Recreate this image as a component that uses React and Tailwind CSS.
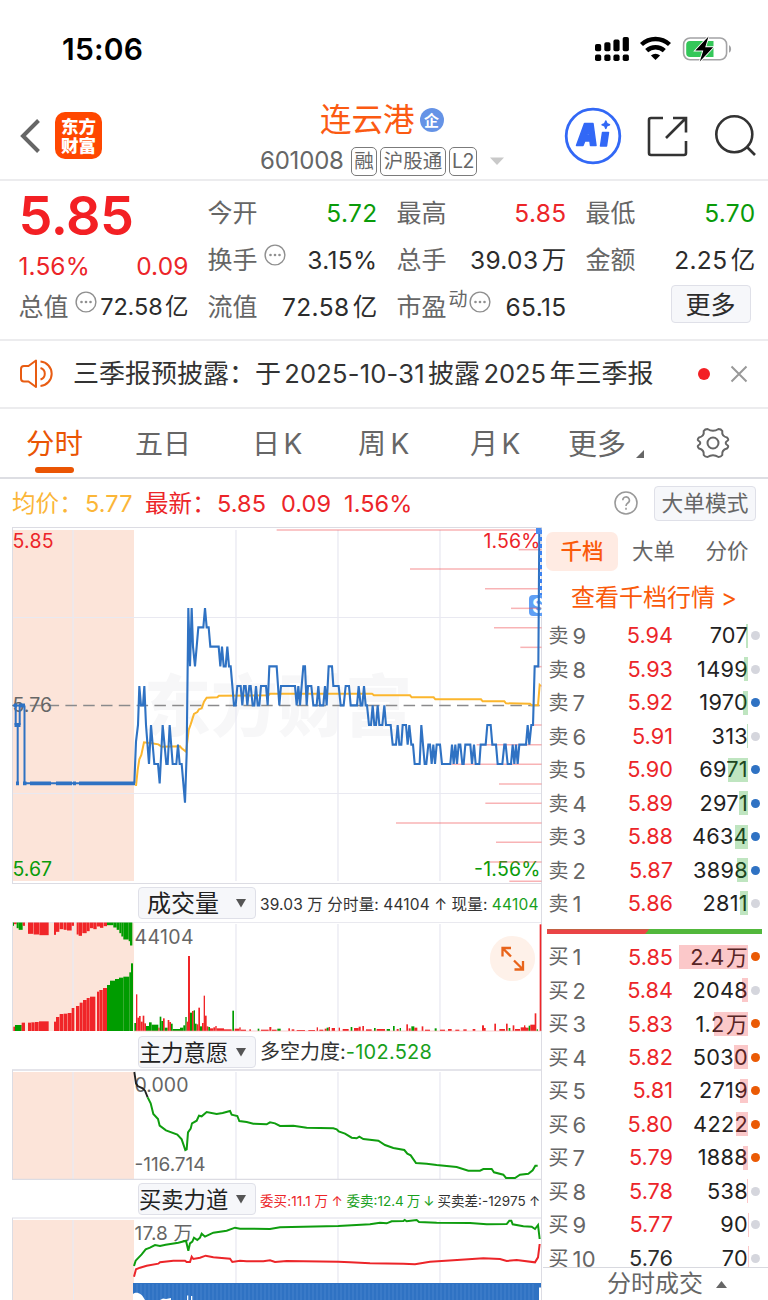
import React from 'react';

const GRAY = '#d5d6dd';
const BLUE = '#2f72c3';
const ORANGE = '#ea5a05';

const asks = [
  { label: '9', price: '5.94', volume: '707', depth: 2, dot: GRAY },
  { label: '8', price: '5.93', volume: '1499', depth: 4, dot: GRAY },
  { label: '7', price: '5.92', volume: '1970', depth: 5.5, dot: BLUE },
  { label: '6', price: '5.91', volume: '313', depth: 1, dot: GRAY },
  { label: '5', price: '5.90', volume: '6971', depth: 20.5, dot: BLUE },
  { label: '4', price: '5.89', volume: '2971', depth: 9, dot: BLUE },
  { label: '3', price: '5.88', volume: '4634', depth: 13.5, dot: BLUE },
  { label: '2', price: '5.87', volume: '3898', depth: 11.5, dot: BLUE },
  { label: '1', price: '5.86', volume: '2811', depth: 8.5, dot: GRAY },
];

const bids = [
  { label: '1', price: '5.85', volume: '2.4 万', depth: 69, dot: ORANGE },
  { label: '2', price: '5.84', volume: '2048', depth: 6, dot: GRAY },
  { label: '3', price: '5.83', volume: '1.2 万', depth: 34, dot: ORANGE },
  { label: '4', price: '5.82', volume: '5030', depth: 14.5, dot: ORANGE },
  { label: '5', price: '5.81', volume: '2719', depth: 8, dot: ORANGE },
  { label: '6', price: '5.80', volume: '4222', depth: 12, dot: ORANGE },
  { label: '7', price: '5.79', volume: '1888', depth: 5.5, dot: ORANGE },
  { label: '8', price: '5.78', volume: '538', depth: 1.5, dot: GRAY },
  { label: '9', price: '5.77', volume: '90', depth: 0.5, dot: GRAY },
  { label: '10', price: '5.76', volume: '70', depth: 0.5, dot: GRAY, flat: true },
];

// Series are stored in 1/3 px units
const priceLine =
  '403,790 408,665 414,615 418,498 423,556 429,556 433,498 438,615 447,732 453,615 463,732 474,732 479,790 488,615 499,732 503,732 509,615 518,732 529,732 534,674 539,732 545,732 555,848 560,700 565,264 570,439 575,264 579,380 585,439 595,322 610,322 615,264 620,322 626,322 631,380 656,380 661,439 666,380 671,439 677,439 682,380 687,439 692,439 702,556 707,556 712,498 722,498 727,556 732,498 737,498 742,556 748,498 752,498 758,556 763,556 768,498 773,556 778,556 783,498 798,498 803,556 808,439 830,439 ' +
  '838,556 843,498 885,498 890,556 895,498 900,556 910,439 915,439 920,556 924,498 934,498 940,556 950,556 955,498 960,556 970,556 975,498 980,556 986,439 996,439 1000,498 1016,498 1022,556 1031,556 1037,498 1047,498 1052,556 1071,556 1076,498 1082,556 1087,556 1092,498 1097,556 1101,556 1107,615 1113,615 1118,556 1123,615 1128,615 1133,556 1138,615 1147,615 1153,556 1158,615 1172,615 1178,674 1188,674 1193,615 1198,674 1204,674 1208,615 1218,615 1223,674 1228,615 1234,674 1239,674 1244,732 1259,732 1264,615 1274,732 1279,732 1285,674 1290,674 1295,732 1300,674 1305,732 1310,674 1320,674 1326,732 1351,732 1356,674 1361,732 1366,674 1371,732 1376,674 1381,674 1387,732 1391,732 1396,674 1411,674 1416,732 1422,674 1427,732 1438,732 1442,674 1457,674 1462,615 1472,615 1477,674 1488,674 1493,732 1507,732 1513,674 1517,674 1523,732 1533,732 1538,674 1543,732 1548,674 1553,732 1558,674 1578,674 1583,615 1588,674 1594,615 1599,615 1604,439 1615,439 1618,30';

const averageLine =
  '408,798 413,750 418,718 424,705 432,667 455,670 475,673 485,680 540,679 545,685 558,695 562,665 566,630 572,613 582,582 592,576 597,568 605,565 612,545 620,533 652,532 657,527 805,526 810,521 1116,521 1122,526 1230,526 1235,532 1301,532 1306,538 1443,538 1448,544 1513,544 1518,550 1590,551 1595,556 1614,556 1619,495 1622,498';

const orderLines = [
  [20, 30], [746, 89], [420, 147], [645, 206], [723, 265], [672, 323], [751, 382], [800, 440], [811, 498],
  [785, 615], [620, 674], [545, 733], [687, 792], [646, 850], [378, 909], [678, 967], [655, 1026], [718, 1084],
];

// [from, to, height, color]
const auctionTop = [
  [39, 42, 10, 'g'], [42, 50, 5, 'r'], [50, 56, 17, 'g'], [56, 68, 22, 'g'], [68, 75, 10, 'r'],
  [84, 100, 34, 'r'], [101, 117, 36, 'r'], [118, 146, 38, 'r'], [162, 168, 37, 'r'], [168, 178, 28, 'r'],
  [179, 190, 20, 'r'], [191, 200, 22, 'r'], [201, 215, 24, 'r'], [215, 222, 10, 'r'], [230, 236, 36, 'r'],
  [236, 246, 40, 'r'], [247, 260, 32, 'r'], [260, 269, 26, 'r'], [270, 280, 17, 'r'], [280, 290, 20, 'r'],
  [291, 300, 12, 'r'], [300, 310, 16, 'r'], [311, 321, 11, 'r'], [321, 340, 8, 'g'], [340, 350, 15, 'g'],
  [350, 358, 22, 'g'], [358, 364, 32, 'g'], [364, 370, 42, 'g'], [370, 386, 51, 'g'], [386, 390, 56, 'g'], [390, 397, 69, 'g'],
];

const auctionBottom = [
  [40, 45, 13, 'r'], [45, 65, 18, 'g'], [65, 75, 25, 'r'], [84, 93, 25, 'r'], [94, 104, 26, 'r'], [105, 116, 27, 'r'],
  [117, 146, 29, 'r'], [162, 168, 28, 'r'], [168, 178, 42, 'r'], [179, 190, 51, 'r'], [191, 202, 52, 'r'], [203, 215, 54, 'r'],
  [215, 223, 69, 'r'], [228, 238, 75, 'r'], [239, 248, 85, 'r'], [249, 260, 93, 'r'], [260, 269, 99, 'r'], [270, 286, 103, 'r'],
  [291, 297, 118, 'r'], [298, 308, 123, 'r'], [309, 321, 129, 'r'], [321, 330, 138, 'g'], [330, 345, 151, 'g'],
  [345, 357, 156, 'g'], [357, 370, 160, 'g'], [370, 388, 163, 'g'], [388, 393, 176, 'g'], [393, 399, 203, 'g'],
];

const volumeBars = [
  [403, 408, 24, 'g'], [408, 412, 110, 'r'], [412, 417, 40, 'r'], [417, 422, 45, 'r'], [422, 428, 28, 'r'], [428, 433, 46, 'r'],
  [433, 438, 23, 'r'], [438, 447, 15, 'g'], [447, 455, 26, 'g'], [455, 475, 19, 'g'], [475, 479, 10, 'r'], [479, 484, 43, 'g'],
  [484, 489, 30, 'g'], [489, 494, 38, 'r'], [494, 503, 10, 'g'], [503, 508, 33, 'r'], [508, 513, 27, 'r'], [513, 518, 22, 'g'],
  [518, 540, 6, 'g'], [540, 550, 10, 'g'], [550, 556, 17, 'g'], [556, 560, 42, 'g'], [560, 564, 28, 'r'], [564, 570, 225, 'r'],
  [570, 576, 55, 'g'], [576, 581, 60, 'r'], [581, 585, 62, 'g'], [585, 590, 22, 'g'], [590, 595, 20, 'r'], [595, 600, 70, 'r'],
  [600, 606, 14, 'g'], [606, 611, 24, 'r'], [611, 615, 106, 'r'], [615, 620, 46, 'r'], [620, 625, 14, 'r'], [625, 630, 12, 'g'],
  [630, 640, 8, 'r'], [640, 646, 11, 'r'], [646, 650, 15, 'r'], [650, 672, 8, 'r'], [672, 695, 5, 'r'], [697, 702, 61, 'g'],
  [704, 718, 7, 'r'], [718, 722, 11, 'r'], [722, 738, 4, 'r'], [748, 753, 5, 'r'], [773, 778, 7, 'g'], [783, 806, 4, 'r'],
  [808, 814, 12, 'r'], [816, 830, 4, 'r'], [832, 842, 7, 'g'], [865, 870, 8, 'r'],
  [875, 883, 5, 'r'], [890, 915, 3, 'r'], [925, 945, 3, 'r'], [950, 954, 11, 'r'], [958, 970, 4, 'r'], [974, 980, 7, 'r'],
  [980, 986, 10, 'g'], [986, 990, 12, 'r'], [995, 1005, 9, 'r'], [1016, 1020, 10, 'r'], [1028, 1046, 6, 'r'], [1052, 1057, 12, 'g'],
  [1062, 1076, 9, 'r'], [1076, 1082, 13, 'r'], [1087, 1092, 15, 'r'], [1098, 1115, 5, 'r'], [1122, 1127, 9, 'g'], [1130, 1155, 6, 'r'],
  [1160, 1170, 6, 'g'], [1179, 1184, 15, 'g'], [1190, 1196, 6, 'r'], [1199, 1203, 9, 'g'], [1219, 1224, 20, 'r'], [1226, 1232, 8, 'r'],
  [1234, 1243, 14, 'g'], [1243, 1252, 10, 'r'], [1265, 1270, 14, 'r'], [1275, 1290, 4, 'r'], [1304, 1310, 8, 'g'], [1320, 1335, 4, 'r'],
  [1344, 1355, 6, 'r'], [1366, 1378, 4, 'r'], [1390, 1400, 5, 'r'], [1418, 1426, 6, 'r'], [1446, 1452, 17, 'r'], [1452, 1457, 9, 'r'],
  [1483, 1488, 22, 'r'], [1498, 1515, 6, 'r'], [1518, 1523, 22, 'r'], [1526, 1531, 9, 'g'], [1538, 1543, 17, 'r'], [1545, 1560, 6, 'r'],
  [1562, 1578, 11, 'r'], [1572, 1576, 17, 'r'], [1578, 1586, 10, 'r'], [1586, 1591, 16, 'g'], [1591, 1605, 19, 'r'], [1604, 1609, 53, 'r'],
  [1610, 1614, 5, 'g'], [1619, 1624, 320, 'r'],
];

const forceStart = '403,-54 408,-20 413,-12 428,-5 435,2 443,22';
const forceLine =
  '443,22 452,40 460,72 474,87 479,107 498,121 532,134 545,148 556,180 560,178 564,127 572,116 576,100 590,92 597,77 605,79 620,66 650,72 668,69 690,63 695,74 712,78 718,93 740,96 760,101 800,103 810,97 825,100 840,108 880,107 920,113 1000,115 1010,118 1016,124 1035,131 1055,143 1070,145 1078,140 1090,147 1135,152 1155,165 1180,174 1213,180 1222,191 1232,196 1248,219 1280,221 1310,225 1370,231 1405,242 1440,242 1450,237 1475,237 1482,247 1510,254 1518,264 1545,264 1560,254 1585,251 1598,241 1606,227 1613,227';

const sellLine =
  '402,528 407,512 425,493 437,478 450,473 465,465 480,468 497,464 535,458 558,452 565,482 570,460 577,455 582,443 592,450 600,443 605,431 615,440 640,428 680,422 705,413 720,416 810,417 840,412 910,410 1015,408 1110,403 1140,398 1160,400 1175,394 1210,393 1214,390 1220,394 1250,390 1257,396 1310,398 1410,399 1460,403 1520,402 1528,392 1534,392 1538,403 1570,409 1595,410 1605,417 1614,405 1619,447';
const buyLine =
  '402,560 408,538 420,533 440,527 475,521 480,517 520,512 555,512 560,516 570,516 575,500 580,507 600,503 617,497 640,502 690,506 697,516 720,512 740,514 790,514 810,511 825,516 860,513 910,514 1015,515 1050,517 1110,520 1210,521 1245,523 1290,515 1360,511 1450,505 1500,507 1520,513 1550,510 1605,517 1614,502 1619,462';

const toPoints = (series, top) =>
  series
    .split(' ')
    .map((pair) => {
      const [x, y] = pair.split(',').map(Number);
      return `${(x / 3).toFixed(2)},${(y / 3 + top).toFixed(2)}`;
    })
    .join(' ');

const barColor = { r: '#f02528', g: '#009c00' };

const Bars = ({ data, base, down }) =>
  data.map(([from, to, h, c], i) => (
    <rect key={i} x={from / 3} y={down ? base : base - h / 3} width={(to - from) / 3} height={h / 3} fill={barColor[c]} />
  ));

const Grid = ({ top, bottom }) =>
  [73, 236, 338, 440].map((x) => (
    <line key={x} x1={x} x2={x} y1={top} y2={bottom} stroke="#e9e9f1" strokeWidth="1.3" />
  ));

const Dots = () => (
  <svg width="22" height="22" viewBox="0 0 22 22" className="shrink-0">
    <circle cx="11" cy="11" r="9.9" fill="none" stroke="#8f8f8f" strokeWidth="1.4" />
    <circle cx="6.5" cy="11" r="1.3" fill="#8f8f8f" />
    <circle cx="11" cy="11" r="1.3" fill="#8f8f8f" />
    <circle cx="15.5" cy="11" r="1.3" fill="#8f8f8f" />
  </svg>
);

const StatusBar = () => (
  <div className="flex h-[98px] items-center justify-between pl-[62px] pr-9">
    <span className="text-[30px] font-semibold tracking-[0.2px] text-black">15:06</span>
    <svg width="138" height="26" viewBox="594 36 138 26">
      <g fill="#000">
        <rect x="595" y="44" width="6.2" height="7.2" rx="1.8" />
        <rect x="604.3" y="42.2" width="6.2" height="9" rx="1.8" />
        <rect x="613.4" y="39.6" width="6.2" height="11.6" rx="1.8" />
        <rect x="622.7" y="37" width="6.2" height="14.2" rx="1.8" />
        <rect x="595" y="54.6" width="6.2" height="6.4" rx="1.8" />
        <rect x="604.3" y="54.6" width="6.2" height="6.4" rx="1.8" />
        <rect x="613.4" y="54.6" width="6.2" height="6.4" rx="1.8" />
        <rect x="622.7" y="54.6" width="6.2" height="6.4" rx="1.8" />
        <path d="M655.5 60l-4.6-4.6a7 7 0 0 1 9.2 0z" />
      </g>
      <path d="M641.5 44.5a20.5 20.5 0 0 1 28 0M646.7 50.7a12.8 12.8 0 0 1 17.6 0" fill="none" stroke="#000" strokeWidth="4.4" />
      <rect x="683.6" y="38" width="43" height="21.8" rx="6.5" fill="none" stroke="#a3a3a5" strokeWidth="1.6" />
      <path d="M690 41h23.5v16H690a3.8 3.8 0 0 1-3.8-3.8v-8.4A3.8 3.8 0 0 1 690 41z" fill="#34c759" />
      <path d="M729 45.2c2.8.8 2.8 6.6 0 7.4z" fill="#a3a3a5" />
      <path d="M708.5 36.5l-13.2 14h8l-3.5 11 13.4-14.3h-8z" fill="#000" stroke="#fff" strokeWidth="1.8" paintOrder="stroke" />
    </svg>
  </div>
);

const Header = () => (
  <div className="flex h-[83px] items-start border-b-2 border-[#ececee]">
    <svg width="20" height="36" viewBox="0 0 20 36" className="ml-[20px] mt-5">
      <path d="M18.5 2.5L3 18l15.5 15.5" fill="none" stroke="#666" strokeWidth="4" />
    </svg>
    <div className="ml-[15px] mt-[14px] flex h-[47px] w-[47px] flex-col items-center justify-center rounded-[10px] bg-[#ff4700] text-[17.5px] font-black leading-[19px] text-white">
      <span>东方</span>
      <span>财富</span>
    </div>
    <div className="ml-[158px] w-[250px]">
      <div className="flex h-[43px] items-center pl-[60px] pt-px">
        <span className="text-[31.5px] leading-none text-[#fb5a12]">连云港</span>
        <span className="ml-[5px] flex h-6 w-6 items-center justify-center rounded-full bg-[#6593e6] text-[15px] font-bold leading-none text-white">
          企
        </span>
      </div>
      <div className="flex h-10 items-center leading-none text-[#666]">
        <span className="w-[91px] text-[24px] tracking-[-0.2px]">601008</span>
        <span className="flex h-[29px] w-[26px] items-center justify-center rounded-[5px] border border-[#7b7b7b] pt-px text-[19.5px]">融</span>
        <span className="ml-[3px] flex h-[29px] w-[66px] items-center justify-center rounded-[5px] border border-[#7b7b7b] pt-px text-[19.5px]">沪股通</span>
        <span className="ml-[3px] flex h-[29px] w-[28px] items-center justify-center rounded-[5px] border border-[#7b7b7b] pt-px text-[19.5px] tracking-[-0.5px]">L2</span>
        <svg width="14" height="8" viewBox="0 0 14 8" className="ml-[13px]">
          <path d="M0 .5h14L7 8z" fill="#c9c9c9" />
        </svg>
      </div>
    </div>
    <svg width="58" height="58" viewBox="0 0 58 58" className="ml-[54px] mt-[9px]">
      <circle cx="29" cy="29" r="26.8" fill="none" stroke="#3268f6" strokeWidth="2.8" />
      <g fill="#3268f6" stroke="#3268f6" strokeLinejoin="round" strokeWidth="1.5">
        <path fillRule="evenodd" d="M20.5 16.5h8.5l3 22h-5.500l-.6-4.600h-5.100l-1.800 4.600h-6.500zM22.500 28h2.900l-.5-4.300z" />
        <path d="M38.500 25.500h6l-2 13.500h-6z" />
        <path d="M41.800 14l1.100 2.600 2.600 1.100-2.600 1.100-1.100 2.600-1.100-2.600-2.600-1.100 2.600-1.100z" />
      </g>
    </svg>
    <svg width="44" height="44" viewBox="0 0 44 44" className="ml-6 mt-4" fill="none" stroke="#333" strokeWidth="2.6">
      <path d="M17 4H5a2 2 0 0 0-2 2v33a2 2 0 0 0 2 2h33a2 2 0 0 0 2-2V27" />
      <path d="M27 4h13v14.500M40 4L20 24" />
    </svg>
    <svg width="44" height="44" viewBox="0 0 44 44" className="ml-6 mt-4" fill="none" stroke="#333" strokeWidth="2.6">
      <circle cx="20.3" cy="20.3" r="18" />
      <path d="M32.500 32.500l8.500 8.500" />
    </svg>
  </div>
);

const Field = ({ label, value, color, small, children }) => (
  <div className="flex h-[47px] items-center">
    <span className="shrink-0 text-[25px] leading-none text-[#666]">{label}</span>
    {children}
    <span
      className={`ml-auto whitespace-nowrap pb-px leading-none [word-spacing:-4px] ${small ? 'text-[23.5px] tracking-[-0.1px]' : 'text-[24.5px] tracking-[0.35px]'} ${color || 'text-[#2c2c2c]'}`}
    >
      {value}
    </span>
  </div>
);

const Quote = () => (
  <div className="flex h-[158px] pl-[18.5px]">
    <div className="w-[170px] pt-px">
      <div className="flex h-[68px] items-center text-[54px] font-semibold leading-none tracking-[-0.5px] text-[#f32024]">5.85</div>
      <div className="flex h-[34px] items-center justify-between pb-px text-[24.5px] leading-none tracking-[0.1px] text-[#ec2529]">
        <span>1.56%</span>
        <span>0.09</span>
      </div>
      <Field label="总值" value="72.58 亿" small>
        <span className="-mt-[12px] ml-[6px]"><Dots /></span>
      </Field>
    </div>
    <div className="ml-[19px] w-[170px] pt-[9px]">
      <Field label="今开" value="5.72" color="text-[#0a9b0a]" />
      <Field label="换手" value="3.15%">
        <span className="-mt-[11px] ml-[6px]"><Dots /></span>
      </Field>
      <Field label="流值" value="72.58 亿" />
    </div>
    <div className="ml-[19px] w-[170px] pt-[9px]">
      <Field label="最高" value="5.85" color="text-[#ec2529]" />
      <Field label="总手" value="39.03 万" />
      <Field label="市盈" value="65.15">
        <span className="-mt-4 ml-[2px] text-[19px] leading-none text-[#666]">动</span>
        <span className="-mt-[11px] ml-px"><Dots /></span>
      </Field>
    </div>
    <div className="ml-[19px] w-[170px] pt-[9px]">
      <Field label="最低" value="5.70" color="text-[#0a9b0a]" />
      <Field label="金额" value="2.25 亿" />
      <div className="ml-[85px] mt-px flex h-[38px] w-[80px] items-center justify-center rounded-[4px] border-[1.5px] border-[#dfe0e8] bg-[#f6f7fa] pt-[2px] text-[25px] leading-none text-[#2c2c2c]">
        更多
      </div>
    </div>
  </div>
);

const Notice = () => (
  <div className="flex h-[70px] items-center border-y-2 border-[#ececee]">
    <svg width="34" height="30" viewBox="0 0 34 30" className="ml-[20px]" fill="none" stroke="#e85c12" strokeWidth="2">
      <path d="M16 1.5v26.5l-7.500-5.500H4a3 3 0 0 1-3-3V10a3 3 0 0 1 3-3h4.500z" strokeLinejoin="round" />
      <path d="M20.500 2.500a12.300 12.300 0 0 1 0 24.500M20.500 9a6 6 0 0 1 0 11.500" />
    </svg>
    <span className="ml-[19px] w-[625px] whitespace-nowrap text-[26px] leading-none text-[#333] [word-spacing:-4px]">
      三季报预披露：于 <span className="text-[25.5px] tracking-[0.2px]">2025-10-31</span> 披露 <span className="text-[25.5px]">2025</span> 年三季报
    </span>
    <span className="h-3 w-3 rounded-full bg-[#f32024]" />
    <svg width="18" height="18" viewBox="0 0 18 18" className="ml-[20px]">
      <path d="M1.500 1.500l15 15M16.500 1.500l-15 15" stroke="#999" strokeWidth="2" />
    </svg>
  </div>
);

const Tabs = () => (
  <div className="flex h-[70px] items-start border-b-[2px] border-[#dddee3] text-[28px] leading-none text-[#666]">
    <div className="ml-[26px] flex w-[109px] flex-col pt-[21px] text-[#ea5504]">
      <span className="text-[28.5px]">分时</span>
      <span className="ml-[9px] mt-[8px] h-[6px] w-[39px] rounded-full bg-[#ea5504]" />
    </div>
    <span className="w-[117px] pt-[21px]">五日</span>
    <span className="w-[106px] whitespace-pre pt-[21px] [word-spacing:-4.5px]">日 K</span>
    <span className="w-[112px] whitespace-pre pt-[21px] [word-spacing:-3.5px]">周 K</span>
    <span className="w-[98px] whitespace-pre pt-[21px] [word-spacing:-4.5px]">月 K</span>
    <span className="w-[68px] pt-[21px] text-[29px]">更多</span>
    <svg width="8" height="8" viewBox="0 0 8 8" className="mt-[41px]">
      <path d="M8 0v8H0z" fill="#666" />
    </svg>
    <svg width="34" height="32" viewBox="-17 -16 34 32" className="ml-[52px] mt-[18px]" fill="none" stroke="#666" strokeWidth="2">
      <circle r="5.5" />
      <path d="M-5.5 -14 Q0 -10.5 5.5 -14 Q8 -14 9.3 -12 Q8.5 -6.8 14 -5.5 Q16 -3.5 14.8 -2.5 Q10.5 0 14.8 2.5 Q16 3.5 14 5.5 Q8.5 6.8 9.3 12 Q8 14 5.5 14 Q0 10.5 -5.5 14 Q-8 14 -9.3 12 Q-8.5 6.8 -14 5.5 Q-16 3.5 -14.8 2.5 Q-10.5 0 -14.8 -2.5 Q-16 -3.5 -14 -5.5 Q-8.5 -6.8 -9.3 -12 Q-8 -14 -5.5 -14z" strokeLinejoin="round" />
    </svg>
  </div>
);

const Legend = () => (
  <div className="flex h-[48px] items-center text-[23.5px] leading-none tracking-[0.1px] text-[#ec2529]">
    <span className="ml-[12px] w-[73px] pt-[2px] text-[#fbb638]">均价：</span>
    <span className="w-[60px] pt-[2px] text-[#fbb638]">5.77</span>
    <span className="w-[72px] pt-[2px]">最新：</span>
    <span className="w-[64px] pt-[2px]">5.85</span>
    <span className="w-[63px] pt-[2px]">0.09</span>
    <span className="pt-[2px]">1.56%</span>
    <svg width="24" height="24" viewBox="0 0 24 24" className="ml-auto" fill="none" stroke="#999" strokeWidth="1.6">
      <circle cx="12" cy="12" r="11" />
      <path d="M8.800 9.300a3.300 3.300 0 1 1 5 2.700c-1.300.9-1.800 1.500-1.800 3" />
      <path d="M12 16.800v2" />
    </svg>
    <div className="ml-[16px] mr-[12px] flex h-[35px] w-[102px] items-center justify-center rounded-[4px] border-[1.5px] border-[#dfe0e8] bg-[#f6f7fa] pt-px text-[21.7px] tracking-normal text-[#666]">
      大单模式
    </div>
  </div>
);

const PriceChart = () => (
  <svg width="531" height="357" viewBox="12 527 531 357" className="block font-[Inter]">
    <text x="144" y="731" fontSize="67" fontWeight="900" fill="#f7f7f8" fontFamily="Noto Sans CJK SC">东方财富</text>
    <rect x="12" y="530" width="122" height="351" fill="#fce4d9" />
    <Grid top={530} bottom={881} />
    <path d="M12 617.500H541M12 793.500H541" stroke="#e9e9f1" strokeWidth="1.2" />
    <path d="M12 527.500H541M12 883.500H541M12.500 527V884" stroke="#dcdce3" />
    <path d="M541.500 527V884" stroke="#dcdce3" />
    <path d="M12 705.500H541" stroke="#8a8a8c" strokeWidth="1.3" strokeDasharray="11.5 6.3" />
    <g fontSize="19.5">
      <text x="12.5" y="547.5" fill="#ec2529" textLength="41">5.85</text>
      <text x="12.5" y="712" fill="#666" textLength="39.5">5.76</text>
      <text x="12.5" y="876" fill="#0a9b0a" textLength="39.5">5.67</text>
      <text x="483.5" y="547.5" fill="#ec2529" textLength="57">1.56%</text>
      <text x="474" y="876" fill="#0a9b0a" textLength="66.5">-1.56%</text>
    </g>
    <rect x="529" y="595" width="16" height="21" rx="4" fill="#5f9ff5" />
    <text x="532" y="613" fontSize="20" fontWeight="700" fill="#fff">S</text>
    {orderLines.map(([x, y]) => (
      <line key={y} x1={270 + x / 3} x2="541.5" y1={520 + y / 3} y2={520 + y / 3} stroke="#ee4a4f" strokeOpacity="0.42" strokeWidth="1.5" />
    ))}
    <polyline points={toPoints(averageLine, 520)} fill="none" stroke="#fbb62e" strokeWidth="2" />
    <path d="M13 705.500h12M15.700 705.500V725M17.700 725V783.300M19.700 725V705.500M24.500 705.500V783.300H134.500" fill="none" stroke={BLUE} strokeWidth="2" />
    <path d="M14.500 725h6M16 783.300h3M23 783.300h3.500M30 783.300h21M56 783.300h16M73 783.300h3M79 783.300h56M14 705.500h3M19 705.500h6" stroke={BLUE} strokeWidth="3.8" />
    <polyline points={toPoints(priceLine, 520)} fill="none" stroke={BLUE} strokeWidth="2.1" />
    <path d="M540.800 530V595" stroke="#3c82f0" strokeWidth="2.4" strokeDasharray="4 3" />
    <rect x="536" y="528" width="5.5" height="6" fill="#4b8df0" />
    <rect x="542" y="527" width="1" height="357" fill="#fff" />
  </svg>
);

const VolumeChart = () => (
  <svg width="531" height="111" viewBox="12 922 531 111" className="block font-[Inter]">
    <rect x="12" y="922" width="122" height="109" fill="#fce4d9" />
    <Grid top={924} bottom={1031} />
    <path d="M12 922.500H541" stroke="#e9e9ef" />
    <path d="M12.500 922V1031M541.500 922V1033" stroke="#dcdce3" />
    <Bars data={auctionTop} base={922.5} down />
    <Bars data={auctionBottom} base={1031} />
    <Bars data={volumeBars} base={1031} />
    <path d="M134 1031H541" stroke="#f3a9aa" strokeWidth="0.6" />
    <text x="134.5" y="943.5" fontSize="19.5" fill="#666" textLength="59">44104</text>
    <circle cx="512.5" cy="958.5" r="22.6" fill="#fef1e9" />
    <path d="M502.500 956.500v-8.500h8.500M503 948.500l8 8M523 961v8.500h-8.500M522.500 969l-8.500-8.500" fill="none" stroke="#e8641b" strokeWidth="2.3" />
  </svg>
);

const ForceChart = () => (
  <svg width="531" height="111" viewBox="12 1069 531 111" className="block font-[Inter]">
    <rect x="12" y="1072" width="122" height="107" fill="#fce4d9" />
    <Grid top={1072} bottom={1179} />
    <path d="M12 1070H541M12 1179.500H541" stroke="#dcdce3" strokeWidth="1.5" />
    <path d="M12.500 1070V1180M541.500 1069V1180" stroke="#dcdce3" />
    <text x="134.5" y="1091.5" fontSize="19.5" fill="#666" textLength="54">0.000</text>
    <text x="134.5" y="1170.5" fontSize="19" fill="#666" textLength="71">-116.714</text>
    <polyline points={toPoints(forceStart, 1090)} fill="none" stroke="#222" strokeWidth="1.9" />
    <polyline points={toPoints(forceLine, 1090)} fill="none" stroke="#0f9d0f" strokeWidth="2" />
  </svg>
);

const PowerChart = () => (
  <svg width="531" height="83" viewBox="12 1217 531 83" className="block font-[Inter]">
    <rect x="12" y="1220" width="122" height="80" fill="#fce4d9" />
    <Grid top={1220} bottom={1283} />
    <rect x="73" y="1283" width="1" height="17" fill="#e9e9f1" />
    <path d="M12 1218H541" stroke="#e9e9ef" strokeWidth="1.5" />
    <path d="M12.500 1218V1300M541.500 1217V1300" stroke="#dcdce3" />
    <text x="134.5" y="1239.5" fontSize="19" fill="#666" textLength="58" fontFamily="Inter, Noto Sans CJK SC">17.8 万</text>
    <polyline points={toPoints(sellLine, 1090)} fill="none" stroke="#0f9d0f" strokeWidth="2" />
    <polyline points={toPoints(buyLine, 1090)} fill="none" stroke="#ec2529" strokeWidth="2" />
    <path d="M133 1283H541v4.500h-2V1300H133z" fill="#2f72c3" />
    {Array.from({ length: 100 }, (_, i) => (
      <line key={i} x1={137 + i * 4} x2={137 + i * 4} y1="1284" y2="1300" stroke="#5d94d4" strokeWidth="0.5" />
    ))}
    <path d="M133 1294c3-3 9-1 12 6h-12zM160 1300l3-1.500 3 .5 5-1v2zM187 1295.500h1.300v4.500H187zM191 1296h1.300v4H191z" fill="#fff" />
  </svg>
);

const PanelTitle = ({ label, big, children }) => (
  <div className="flex h-[38px] items-center border-r border-[#dcdce3] pl-[126px]">
    <div className="flex h-[32px] w-[118px] shrink-0 items-center justify-between rounded-[4px] border-[1.5px] border-[#dfe0e8] bg-[#f6f7fa] pr-[9px] leading-none text-[#222]">
      <span className={big ? 'ml-[8px] pt-px text-[24px]' : 'pt-[2px] text-[22.3px]'}>{label}</span>
      <svg width="10" height="9" viewBox="0 0 10 9">
        <path d="M0 0h10L5 8.500z" fill="#555" />
      </svg>
    </div>
    <div className="ml-[4px] flex items-center whitespace-pre leading-none text-[#333]">{children}</div>
  </div>
);

const Charts = () => (
  <div className="w-[543px] shrink-0 pl-[12px]">
    <PriceChart />
    <div className="w-[530px]">
      <PanelTitle label="成交量" big>
        <span className="pt-[4px] text-[15.5px] tracking-[0.16px] [word-spacing:-0.2px]">39.03 万 分时量: 44104 ↑ 现量: </span>
        <span className="pt-[4px] text-[15.5px] tracking-[0.2px] text-[#18a01c]">44104</span>
      </PanelTitle>
    </div>
    <VolumeChart />
    <div className="h-[36px] w-[530px]">
      <PanelTitle label="主力意愿">
        <span className="text-[20px]">多空力度:</span>
        <span className="text-[20px] tracking-[0.25px] text-[#18a01c]">-102.528</span>
      </PanelTitle>
    </div>
    <ForceChart />
    <div className="h-[37px] w-[530px]">
      <PanelTitle label="买卖力道">
        <span className="pt-[6px] text-[13.5px] tracking-[0.1px] text-[#ec2529] [word-spacing:-0.3px]">委买:11.1 万 ↑ </span>
        <span className="pt-[6px] text-[13.5px] text-[#18a01c] [word-spacing:-0.8px]">委卖:12.4 万 ↓ </span>
        <span className="pt-[6px] text-[13.5px] [word-spacing:-0.5px]">买卖差:-12975 ↑</span>
      </PanelTitle>
    </div>
    <PowerChart />
  </div>
);

const OrderRow = ({ side, row }) => (
  <div className="flex h-[33.48px] shrink-0 items-center pl-[5.5px] text-[22px] leading-none">
    <span className="w-[24px] pt-px text-[20px] text-[#666]">{side}</span>
    <span className="w-[30.5px] pt-px tracking-[0.3px] text-[#666]">{row.label}</span>
    <span className={`w-[70px] pt-px text-right text-[21.7px] ${row.flat ? 'text-[#2c2c2c]' : 'text-[#ec2529]'}`}>{row.price}</span>
    <span className="relative flex h-6 w-[75px] items-center justify-end whitespace-pre text-[#222]">
      <span className="pt-px text-[21.7px] tracking-[0.3px] [word-spacing:-5px]">{row.volume}</span>
      <span
        className={`absolute right-0 top-0 h-6 ${side === '卖' ? 'bg-[#18a01c]/28' : 'bg-[#ee2a2f]/26'}`}
        style={{ width: row.depth }}
      />
    </span>
    <span className="ml-[3px] h-[9px] w-[9px] rounded-full" style={{ background: row.dot }} />
  </div>
);

const OrderBook = () => (
  <div className="flex w-[225px] flex-col">
    <div className="mt-[5px] flex h-[39px] shrink-0 items-center text-[21.5px] leading-none text-[#666]">
      <span className="ml-[3px] flex h-[39px] w-[72px] items-center justify-center rounded-[7px] bg-[#ffebe3] font-medium text-[#fa5a0a]">千档</span>
      <span className="ml-[14px]">大单</span>
      <span className="ml-[30.5px]">分价</span>
    </div>
    <div className="flex h-[48px] shrink-0 items-center pl-[28px] pt-[6px] text-[24px] leading-none text-[#fa5a0a]">
      <span>查看千档行情</span>
      <span className="ml-[6px]">&gt;</span>
    </div>
    {asks.map((row) => (
      <OrderRow key={row.price} side="卖" row={row} />
    ))}
    <div className="ml-[4px] mt-[9px] flex h-[5px] w-[215px] shrink-0 bg-[#52b83c]">
      <div className="w-[102px] bg-[#ea4446] [clip-path:polygon(0_0,100%_0,96%_100%,0_100%)]" />
    </div>
    <div className="mt-[6px] flex h-[327px] shrink-0 flex-col">
      {bids.map((row) => (
        <OrderRow key={row.price} side="买" row={row} />
      ))}
    </div>
    <div className="z-10 flex h-[34px] shrink-0 items-center border-t-[1.5px] border-[#d8d9df] bg-white pb-px pl-[64px] text-[24px] leading-none text-[#666]">
      分时成交
      <svg width="11" height="7" viewBox="0 0 11 7" className="ml-[13px]">
        <path d="M5.500 0L11 7H0z" fill="#666" />
      </svg>
    </div>
  </div>
);

const App = () => {
  return (
    <div className="flex h-[1300px] w-[768px] flex-col overflow-hidden bg-white font-['Inter','Noto_Sans_CJK_SC',sans-serif]">
      <StatusBar />
      <Header />
      <Quote />
      <Notice />
      <Tabs />
      <Legend />
      <div className="flex h-[773px]">
        <Charts />
        <OrderBook />
      </div>
    </div>
  );
};

export default App;
